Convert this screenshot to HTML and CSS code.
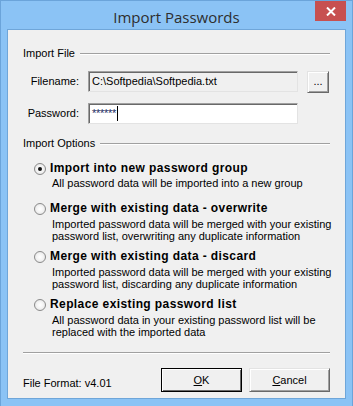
FILE: index.html
```html
<!DOCTYPE html>
<html lang="en">
<head>
	<meta charset="UTF-8">
	<title>Import Passwords</title>
	<link rel="stylesheet" href="styles.css">
</head>
<body>
	<div class="window">
		<div class="titlebar">
			<span class="title">Import Passwords</span>
			<div class="close">
				<svg width="10" height="9" viewBox="0 0 10 9"><path d="M1 0.5 L9 8.5 M9 0.5 L1 8.5" stroke="#fff" stroke-width="2"/></svg>
			</div>
		</div>
		<div class="client">
			<div class="group-head"><span>Import File</span><div class="rule"></div></div>

			<div class="form">
				<div class="row">
					<label>Filename:</label>
					<div class="field readonly">C:\Softpedia\Softpedia.txt</div>
					<button class="browse">...</button>
				</div>
				<div class="row">
					<label>Password:</label>
					<div class="field"><span class="stars">******</span><span class="caret"></span></div>
				</div>
			</div>

			<div class="group-head second"><span>Import Options</span><div class="rule"></div></div>

			<div class="options">
				<div class="option first">
					<div class="head"><span class="radio checked"></span><b>Import into new password group</b></div>
					<div class="desc">All password data will be imported into a new group</div>
				</div>
				<div class="option">
					<div class="head"><span class="radio"></span><b>Merge with existing data - overwrite</b></div>
					<div class="desc">Imported password data will be merged with your existing<br>password list, overwriting any duplicate information</div>
				</div>
				<div class="option">
					<div class="head"><span class="radio"></span><b>Merge with existing data - discard</b></div>
					<div class="desc">Imported password data will be merged with your existing<br>password list, discarding any duplicate information</div>
				</div>
				<div class="option">
					<div class="head"><span class="radio"></span><b>Replace existing password list</b></div>
					<div class="desc">All password data in your existing password list will be<br>replaced with the imported data</div>
				</div>
			</div>

			<div class="separator"></div>

			<div class="footer">
				<span class="format">File Format: v4.01</span>
				<div class="buttons">
					<button class="btn default"><u>O</u>K</button>
					<button class="btn"><u>C</u>ancel</button>
				</div>
			</div>
		</div>
	</div>
</body>
</html>
```

FILE: styles.css
```css
html, body {
	margin: 0;
	padding: 0;
}

*, *::before, *::after {
	box-sizing: border-box;
}

body {
	font-family: "Liberation Sans", Arial, sans-serif;
	font-size: 11px;
	color: #000;
	background: #fff;
}

.window {
	width: 353px;
	height: 406px;
	background: #8bc3f5;
	border: 1px solid #6ba4da;
	border-bottom: none;
	display: flex;
	flex-direction: column;
	overflow: hidden;
}

.titlebar {
	height: 28px;
	flex: none;
	display: flex;
	justify-content: center;
	align-items: center;
	position: relative;
}

.title {
	font-family: "Open Sans", "Noto Sans", sans-serif;
	font-size: 15px;
	color: #2e2e2e;
	margin-top: 3px;
}

.close {
	position: absolute;
	top: 0;
	right: 6px;
	width: 31px;
	height: 20px;
	background: #c75050;
	display: flex;
	align-items: center;
	justify-content: center;
}

.client {
	margin: 0 6px 0 6px;
	height: 370px;
	flex: none;
	background: #f0f0f0;
	border: 1px solid #6fa6d9;
	padding: 17px 15px 0 15px;
	display: flex;
	flex-direction: column;
	white-space: nowrap;
}

.group-head {
	display: flex;
	align-items: center;
	line-height: 13px;
	height: 13px;
}

.group-head .rule {
	flex: 1;
	height: 2px;
	border-top: 1px solid #a0a0a0;
	border-bottom: 1px solid #fff;
	margin-left: 5px;
	margin-top: 1px;
}

.group-head.second {
	margin-top: 12px;
}

.form {
	display: flex;
	flex-direction: column;
	gap: 10px;
	margin-top: 11px;
}

.row {
	display: flex;
	align-items: flex-start;
	height: 22px;
}

.row label {
	width: 56px;
	text-align: right;
	line-height: 21px;
	margin-right: 9px;
}

.field {
	width: 210px;
	height: 21px;
	background: #fff;
	border: 1px solid;
	border-color: #a0a0a0 #e3e3e3 #e3e3e3 #a0a0a0;
	box-shadow: inset 1px 1px 0 #696969;
	padding: 0 3px;
	line-height: 19px;
	display: flex;
	align-items: center;
}

.field.readonly {
	background: #f0f0f0;
}

.stars {
	color: #1a2a60;
	font-size: 11px;
	letter-spacing: -0.3px;
}

.caret {
	width: 1px;
	height: 15px;
	background: #000;
	margin-left: 1px;
}

.browse {
	margin-left: 9px;
	width: 22px;
	height: 22px;
	padding: 0 0 3px 0;
	font-family: inherit;
	font-size: 11px;
	background: #f0f0f0;
	border: 1px solid;
	border-color: #e3e3e3 #696969 #696969 #e3e3e3;
	box-shadow: inset 1px 1px 0 #fff, inset -1px -1px 0 #a0a0a0;
}

.options {
	display: flex;
	flex-direction: column;
	padding-left: 11px;
	margin-top: 12px;
}

.option + .option {
	margin-top: 8px;
}

.option.first {
	margin-bottom: 5px;
}

.head {
	display: flex;
	align-items: center;
	line-height: 13px;
	height: 13px;
}

.head b {
	font-weight: 700;
	font-size: 12px;
	letter-spacing: 0.4px;
}

.radio {
	width: 12px;
	height: 12px;
	flex: none;
	border-radius: 50%;
	border: 1px solid #8a8a8a;
	background: radial-gradient(circle at 50% 50%, #fff 0, #f4f4f4 45%, #dcdcdc 100%);
	margin-right: 4px;
	display: flex;
	align-items: center;
	justify-content: center;
}

.radio.checked::after {
	content: "";
	width: 4px;
	height: 4px;
	border-radius: 50%;
	background: #111;
}

.desc {
	margin: 3px 0 0 18px;
	line-height: 12px;
}

.option.first .desc {
	margin-top: 2px;
}

.separator {
	margin-top: 14px;
	height: 2px;
	flex: none;
	border-top: 1px solid #a0a0a0;
	border-bottom: 1px solid #fff;
}

.footer {
	display: flex;
	align-items: center;
	justify-content: space-between;
	margin-top: 14px;
}

.format {
	line-height: 13px;
	margin-top: 6px;
}

.buttons {
	display: flex;
	gap: 7px;
}

.btn {
	width: 81px;
	height: 24px;
	font-family: inherit;
	font-size: 11px;
	padding: 0;
	background: #f0f0f0;
	border: 1px solid;
	border-color: #e3e3e3 #696969 #696969 #e3e3e3;
	box-shadow: inset 1px 1px 0 #fff, inset -1px -1px 0 #a0a0a0;
}

.btn.default {
	border: 1px solid #000;
	box-shadow: inset 1px 1px 0 #fff, inset -1px -1px 0 #696969;
}
```
